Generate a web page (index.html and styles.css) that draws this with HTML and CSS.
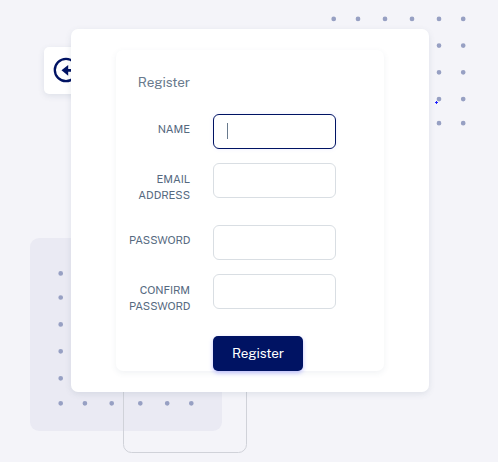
FILE: index.html
```html
<!DOCTYPE html>
<html lang="en">
<head>
<meta charset="utf-8">
<title>Register</title>
<link rel="stylesheet" href="styles.css">
</head>
<body>
<svg class="decor" width="498" height="462" viewBox="0 0 498 462" aria-hidden="true">
  <rect x="30" y="238" width="192" height="193" rx="9" fill="#eaeaf3"/>
  <rect x="123.500" y="330.500" width="123" height="122" rx="8" fill="none" stroke="#d0d2d9"/>
  <g class="dots">
    <path d="M333.700 18.900h.01M358 18.900h.01M385 18.900h.01M412 18.900h.01M439 18.900h.01M463.200 18.900h.01"/>
    <path d="M439 45.600h.01M463.200 45.600h.01M439 72.300h.01M463.200 72.300h.01M439 99.100h.01M463.200 99.100h.01M439 123.200h.01M463.200 123.200h.01"/>
    <path d="M60.700 273.400h.01M60.700 297.500h.01M60.700 324.400h.01M60.700 351.300h.01M60.700 378.300h.01"/>
    <path d="M60.700 403.300h.01M84.900 403.300h.01M111.700 403.300h.01M140.300 403.300h.01M167.200 403.300h.01M191.300 403.300h.01"/>
  </g>
  <path d="M436.500 101v3M435 102.500h3" stroke="#2020ff" stroke-width="1"/>
</svg>
<a class="back" href="#" aria-label="Back">
  <svg width="26" height="26" viewBox="0 0 26 26"><circle cx="13" cy="13" r="11.200" fill="none" stroke="#001363" stroke-width="2.300"/><path d="M8.500 13.300L15.200 7.900V12H20V14.800H15.200V18.700Z" fill="#001363"/></svg>
</a>
<main class="card">
  <form class="panel">
    <h1 class="title">Register</h1>
    <div class="row single"><label for="name">Name</label><div class="input focused" id="name"><span class="caret"></span></div></div>
    <div class="row"><label for="email">Email Address</label><input class="input" id="email" type="email"></div>
    <div class="row single"><label for="password">Password</label><input class="input" id="password" type="password"></div>
    <div class="row"><label for="confirm">Confirm Password</label><input class="input" id="confirm" type="password"></div>
    <button class="submit" type="button">Register</button>
  </form>
</main>
</body>
</html>
```
FILE: styles.css
```css
* { box-sizing: border-box; }
body {
  margin: 0;
  height: 462px;
  padding: 29px 69px 0 71px;
  overflow: hidden;
  position: relative;
  background: #f4f4f9;
  color: #697a8d;
  font-family: "Public Sans", Roboto, sans-serif;
}
.decor { position: absolute; left: 0; top: 0; }
.dots { fill: none; stroke: #97a0c3; stroke-width: 4.7; stroke-linecap: round; }
.back {
  position: absolute;
  left: 44px;
  top: 47px;
  width: 46px;
  height: 47px;
  padding: 10px 9px;
  border-radius: 5px;
  background: #fff;
  box-shadow: 0 2px 6px rgba(67, 89, 113, .12);
}
.back svg { display: block; }
.card {
  position: relative;
  height: 363px;
  padding: 21px 45px;
  border-radius: 7px;
  background: #fff;
  box-shadow: 0 2px 6px rgba(67, 89, 113, .12);
}
.panel {
  height: 321px;
  padding: 24px 48px 0 13px;
  border-radius: 7px;
  box-shadow: 0 2px 6px rgba(67, 89, 113, .08);
}
.title {
  width: 61px;
  margin: 0 0 24px;
  line-height: 16px;
  font-size: 13.5px;
  font-weight: 400;
  text-align: right;
  white-space: nowrap;
  letter-spacing: -.1px;
}
.row {
  display: grid;
  grid-template-columns: 61px 123px;
  column-gap: 23px;
  align-items: start;
  margin-bottom: 14px;
}
.row label {
  padding: 8px 0;
  color: #566a7f;
  font-size: 11px;
  line-height: 16px;
  text-align: right;
  text-transform: uppercase;
  letter-spacing: -.08px;
}
.single label { padding: 7px 0; }
.input {
  display: flex;
  align-items: center;
  width: 123px;
  height: 35px;
  padding: 0 13px;
  border: 1px solid #d9dee3;
  border-radius: 6px;
  background: #fff;
}
.focused { border-color: #001363; box-shadow: 0 0 4px rgba(105, 108, 255, .12); }
.caret { width: 1px; height: 16px; margin-bottom: 1px; background: #697a8d; }
.submit {
  display: block;
  width: 90px;
  height: 35px;
  margin-left: 84px;
  padding: 0;
  border: 0;
  border-radius: 5px;
  background: #001363;
  color: #fff;
  font: 13.5px/35px "Public Sans", Roboto, sans-serif;
  letter-spacing: -.1px;
  box-shadow: 0 2px 4px rgba(105, 108, 255, .4);
}
```
